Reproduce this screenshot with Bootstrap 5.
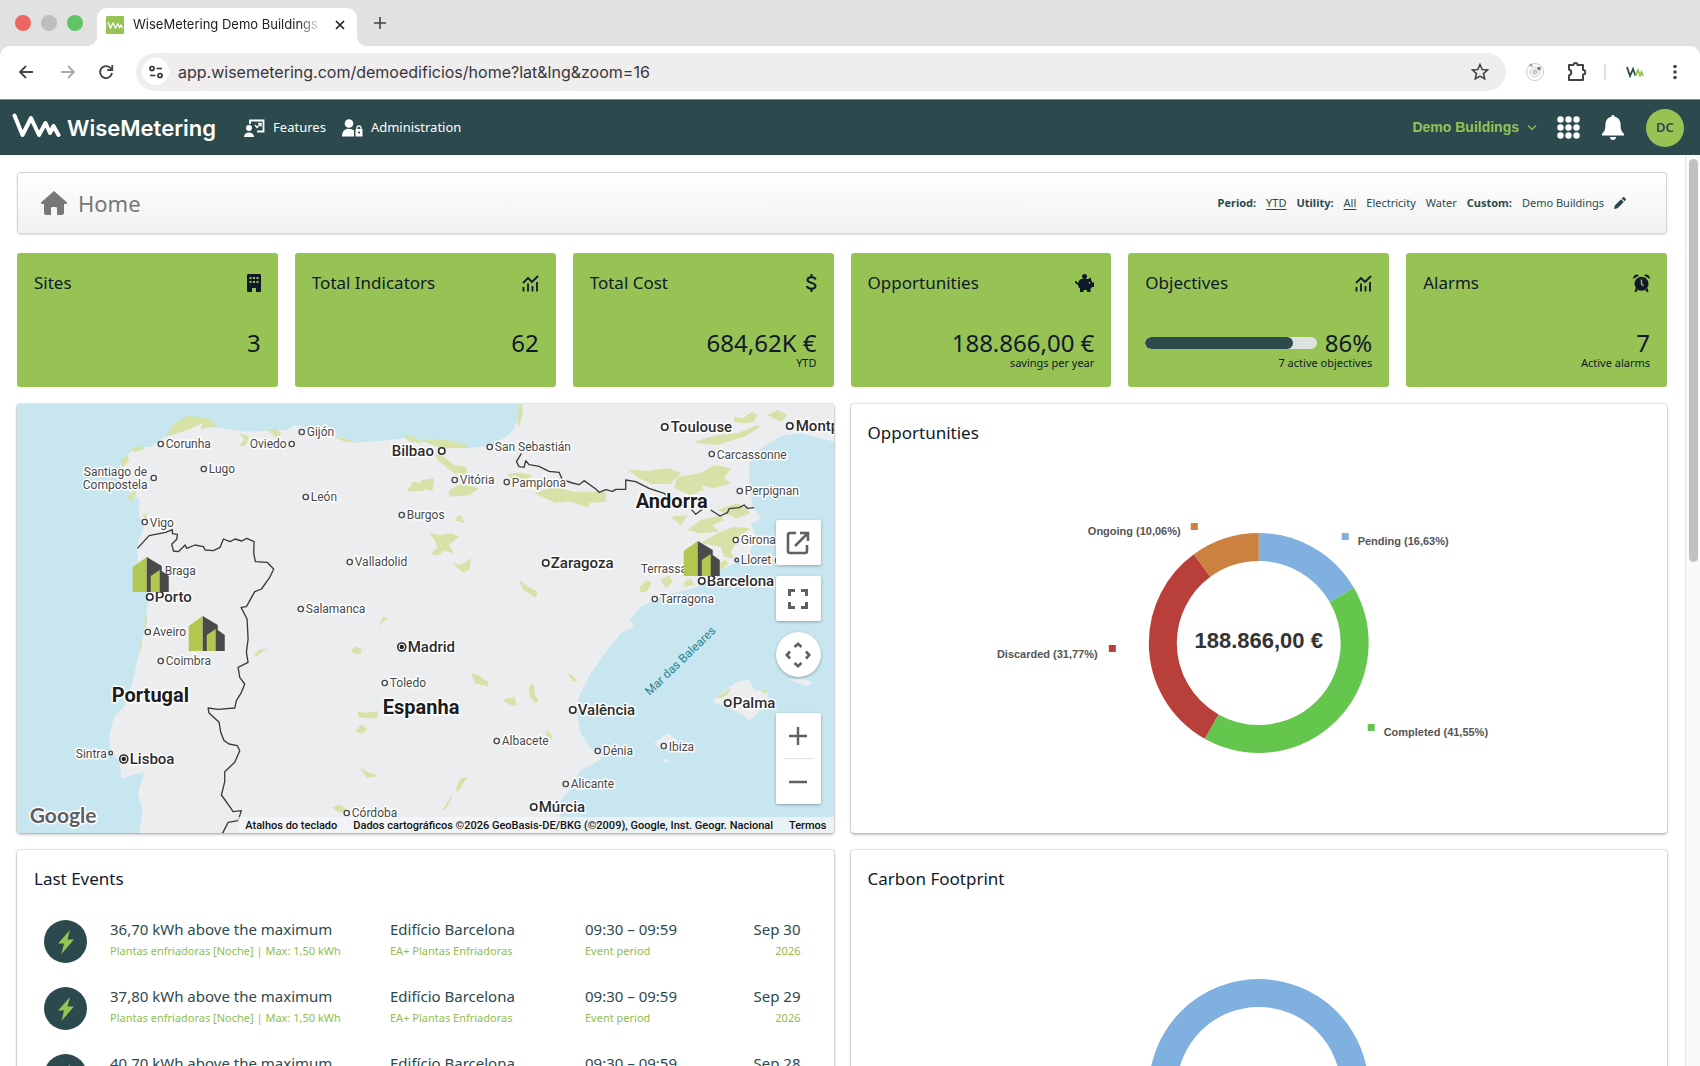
<!DOCTYPE html>
<html lang="en">
<head>
<meta charset="utf-8">
<meta name="viewport" content="width=device-width, initial-scale=1">
<title>WiseMetering Demo Buildings</title>
<link href="https://cdn.jsdelivr.net/npm/bootstrap@5.3.0/dist/css/bootstrap.min.css" rel="stylesheet">
<style>
:root{--lime:#97c354;--teal:#2c4a4d;--ink:#10192c}
body{font-family:"Noto Sans",sans-serif;font-size:15px;color:var(--teal);background:#fff}
a{color:inherit;text-decoration:none}
svg{display:block;flex:none}
.chrome{font-family:Inter,sans-serif;background:#e1e1e1}
.tabstrip{height:46px;padding-left:15px}
.light{width:16px;height:16px;border-radius:50%;margin-right:10px}
.tab{width:260px;height:38px;margin:8px 0 0 4px;padding:0 9px 5px;background:#fff;border-radius:10px 10px 0 0;position:relative;font-size:13px;color:#222}
.tab::before,.tab::after{content:"";position:absolute;bottom:0;width:10px;height:10px}
.tab::before{left:-10px;background:radial-gradient(circle at 0 0,transparent 10px,#fff 10px)}
.tab::after{right:-10px;background:radial-gradient(circle at 100% 0,transparent 10px,#fff 10px)}
.tabname{width:188px;margin-left:9px;white-space:nowrap;overflow:hidden;-webkit-mask-image:linear-gradient(90deg,#000 88%,transparent 100%);mask-image:linear-gradient(90deg,#000 88%,transparent 100%)}
.plain{border:0;background:none;padding:0;color:inherit}
.toolbar{height:53px;background:#fff;border-radius:10px 10px 0 0;padding:0 18px 2px 16px;color:#444}
.omnibox{height:38px;background:#efedee;border-radius:19px;margin-left:20px;padding:0 16px 0 6px}
.siteinfo{width:27px;height:27px;border-radius:50%;background:#fff}
.omnibox input{font-size:16px;color:#38363b;background:none;border:0;outline:0;padding:0;margin-left:9px;min-width:0}
.topnav{height:56px;background:var(--teal);border-top:1px solid #7d9091;padding:0 16px 0 12px;color:#fff;font-size:13px;flex:none}
.brandname{font-family:Inter,sans-serif;font-weight:600;font-size:22px;line-height:30px;margin-left:6px}
.account{font-family:"Liberation Sans",sans-serif;font-weight:700;font-size:14px;color:var(--lime)}
.iconset{gap:22px;margin-left:20px}
.avatar{width:38px;height:38px;border-radius:50%;background:var(--lime);color:var(--teal);font-weight:600}
.content{padding:17px 18px 0 17px}
.headbar{height:62px;border:1px solid #d3d3d3;border-radius:3px;background:linear-gradient(#fff,#f1f1f1);padding:0 40px 0 23px;box-shadow:0 1px 2px rgba(0,0,0,.12);font-size:11px;margin-bottom:19px}
.headbar h1{font-size:22px;color:#777;margin:0 0 0 11px;font-weight:400}
.filters{gap:10px}
.filters u{text-underline-offset:2px}
.tiles{display:grid;grid-template-columns:repeat(6,1fr);gap:17px;color:var(--ink);margin-bottom:17px}
.tile{background:var(--lime);border-radius:3px;height:134px;padding:17px 17px 18px}
.tile h2,.panel h2{font-size:17px;line-height:26px;margin:0;font-weight:400;color:var(--ink)}
.figure-value{font-size:24px;line-height:28px;text-align:right}
.tilenote{font-size:11px;line-height:12px;height:12px;text-align:right}
.meter{height:12px;border-radius:6px;background:#dbe3e0}
.meter .progress-bar{background:var(--teal);border-radius:6px}
.panels{display:grid;grid-template-columns:1fr 1fr;gap:17px}
.panel{background:#fff;border-radius:3px;box-shadow:0 0 2px rgba(0,0,0,.4),0 2px 3px rgba(0,0,0,.2);height:429px;overflow:hidden}
.panel h2{padding:16px 17px 0}
.chart{font-family:"Liberation Sans",sans-serif;font-weight:700;font-size:11px;fill:#555;width:100%}
.mapview{font-family:Roboto,sans-serif;font-size:12px}
.mapview text{paint-order:stroke;stroke:#fff;stroke-width:3px;stroke-linejoin:round;fill:#48484a}
.mapview .city{font-size:15px;font-weight:500;fill:#2c2c2e}
.mapview .country{font-size:20px;font-weight:700;fill:#1c1c1e}
.mapview .sea{stroke:none;fill:#2a8494}
.mapview .logo{font-family:Lato,sans-serif;font-size:21px;font-weight:700;fill:#5c6064}
.controls{position:absolute;top:116px;right:13px;width:45px}
.controls button,.zoombox{background:#fff;border:0;border-radius:2px;box-shadow:0 1px 3px rgba(0,0,0,.3);width:45px}
.controls button{height:45px;padding:0;margin-bottom:11px;display:flex;align-items:center;justify-content:center}
.zoombox{margin-top:36px}
.controls .zoombox button{box-shadow:none;margin:0}
.mapfoot{position:absolute;right:0;bottom:0;height:16px;background:rgba(245,246,247,.75);font-size:11px;line-height:18px;color:#111;font-weight:500;padding:0 7px}
.mapfoot>*{white-space:nowrap}
.event{display:grid;grid-template-columns:66px 280px 195px 1fr;padding:0 33px 0 27px;height:67px;align-items:center}
.events{padding-top:16px}
.event b{font-weight:400;display:block;line-height:22px}
.event small{font-size:11px;color:#8fbe4b;display:block;line-height:22px;margin-bottom:4px}
.bolt{width:43px;height:43px;border-radius:50%;background:var(--teal)}
.scrollrail{width:15px;border-left:1px solid #e6e6e6;background:#fafafa;padding:4px 2px 0 3px;flex:none}
.scrollthumb{height:403px;border-radius:5px;background:#c1c1c1}
</style>
<script src="https://cdn.jsdelivr.net/npm/bootstrap@5.3.0/dist/js/bootstrap.bundle.min.js"></script>
</head>
<body class="vh-100 d-flex flex-column overflow-hidden">
<header class="chrome flex-shrink-0">
  <div class="tabstrip d-flex align-items-center">
    <span class="light" style="background:#ec6560"></span><span class="light" style="background:#bdbdbd"></span><span class="light" style="background:#60c463"></span>
    <div class="tab d-flex align-items-center">
      <svg width="18" height="18" viewBox="0 0 18 18"><rect width="18" height="18" rx="1" fill="#97c354"/><path d="M2 6l2.500 6L7 7l2.500 5L12 8l1.500 3.500L15 9l1.500 3" fill="none" stroke="#fff" stroke-width="1.300"/></svg>
      <span class="tabname">WiseMetering Demo Buildings</span>
      <button class="plain ms-auto" aria-label="Close tab"><svg width="16" height="16" viewBox="0 0 16 16" stroke="#222" stroke-width="1.700"><path d="M4 4l8 8M12 4l-8 8"/></svg></button>
    </div>
    <button class="plain ms-3" aria-label="New tab"><svg width="14" height="14" viewBox="0 0 14 14" stroke="#444" stroke-width="1.600"><path d="M7 1v12M1 7h12"/></svg></button>
  </div>
  <div class="toolbar d-flex align-items-center">
    <button class="plain" aria-label="Back"><svg width="20" height="20" viewBox="0 0 20 20" fill="none" stroke="#444" stroke-width="1.800"><path d="M17 10H4M10 4l-6 6 6 6"/></svg></button>
    <button class="plain ms-4" aria-label="Forward"><svg width="20" height="20" viewBox="0 0 20 20" fill="none" stroke="#aaa" stroke-width="1.800"><path d="M1 10h13M8 4l6 6-6 6"/></svg></button>
    <button class="plain ms-3" aria-label="Reload"><svg width="20" height="20" viewBox="0 0 20 20" fill="none" stroke="#444" stroke-width="1.800"><path d="M16 11a6 6 0 1 1-1.500-5L16 7.500M16.300 3v5h-5"/></svg></button>
    <div class="omnibox d-flex align-items-center flex-fill">
      <span class="siteinfo d-flex align-items-center justify-content-center"><svg width="16" height="16" viewBox="0 0 16 16" fill="none" stroke="#333" stroke-width="1.700"><circle cx="4" cy="4.500" r="2"/><path d="M8.500 4.500H14M2 11.500h5.500"/><circle cx="12" cy="11.500" r="2"/></svg></span>
      <input class="flex-fill" type="text" aria-label="Address" value="app.wisemetering.com/demoedificios/home?lat&amp;lng&amp;zoom=16">
      <button class="plain" aria-label="Bookmark"><svg width="20" height="20" viewBox="0 0 20 20" fill="none" stroke="#444" stroke-width="1.600"><path d="M10 2.500l2.200 5 5.300.5-4 3.600 1.200 5.300L10 14.100l-4.700 2.800 1.200-5.300-4-3.600 5.300-.5z"/></svg></button>
    </div>
    <svg class="ms-3" width="26" height="20" viewBox="0 0 26 20" fill="none" stroke="#ccc"><circle cx="13" cy="10" r="8.500"/><circle cx="13" cy="10" r="5"/><circle cx="13" cy="10" r="2.500" fill="#ccc"/><circle cx="9" cy="3" r="1.500" fill="#999" stroke="none"/><circle cx="17" cy="6.500" r="1.800" fill="#777" stroke="none"/></svg>
    <svg class="ms-3 me-3" width="24" height="22" viewBox="0 0 24 22"><path d="M5 4h4.500a2 2 0 0 1 4 0H19v5a2 2 0 0 1 0 4.500V19H5v-4.500c3-1 3-5 0-6z" fill="none" stroke="#444" stroke-width="2" stroke-linejoin="round"/></svg>
    <span class="border-start border-2 me-3 pe-1" style="height:16px"></span>
    <svg width="18" height="12" viewBox="0 0 18 12" fill="none" stroke-width="1.800"><path d="M1 1l3 9 3-7 2.500 7" stroke="#2c4a4d"/><path d="M9.500 10l2.500-6 2 5.500L15.500 6l1.500 4" stroke="#97c354"/></svg>
    <button class="plain ms-4" aria-label="Menu"><svg width="14" height="18" viewBox="0 0 14 18" fill="#444"><circle cx="7" cy="3.500" r="1.800"/><circle cx="7" cy="9" r="1.800"/><circle cx="7" cy="14.500" r="1.800"/></svg></button>
  </div>
</header>

<nav class="topnav d-flex align-items-center">
  <a href="#" class="d-flex align-items-start"><svg width="49" height="26" viewBox="0 0 49 26" fill="none" stroke="#fff" stroke-width="4" stroke-linejoin="round" stroke-linecap="round"><path d="M2.500 2.500l8 19.500L19 5l8 17 6.500-12L38 20l3.500-7 5 9"/></svg><span class="brandname">WiseMetering</span></a>
  <a href="#" class="d-flex align-items-center ms-4 ps-1"><svg width="21" height="18" viewBox="0 0 21 18"><path d="M6 5V1.500h13.500v11H13" fill="none" stroke="#fff" stroke-width="1.800"/><path d="M11 6l2 2.500L17 4.500M17 7.500v-3h-3" fill="none" stroke="#fff" stroke-width="1.300"/><circle cx="5" cy="9" r="3" fill="#fff"/><path d="M0 18c0-6 10-6 10 0z" fill="#fff"/></svg><span class="ms-2">Features</span></a>
  <a href="#" class="d-flex align-items-center ms-3"><svg width="21" height="18" viewBox="0 0 21 18" fill="#fff"><circle cx="7" cy="4.500" r="4.300"/><path d="M0 17.500c0-9 8-9 12-6v6z"/><path d="M13.500 10h7v7.500h-7z"/><path d="M15 10.500V9a2 2 0 0 1 4 0v1.500" fill="none" stroke="#fff" stroke-width="1.300"/><circle cx="17" cy="13.500" r="1.100" fill="#2c4a4d"/></svg><span class="ms-2">Administration</span></a>
  <button class="plain account ms-auto d-flex align-items-center">Demo Buildings<svg class="ms-2" width="10" height="8" viewBox="0 0 10 8" fill="none" stroke="#97c354" stroke-width="1.200"><path d="M1 1.500l4 4 4-4"/></svg></button>
  <div class="iconset d-flex align-items-center">
  <button class="plain" aria-label="Apps"><svg width="23" height="23" viewBox="0 0 23 23" fill="#fff"><circle cx="3.500" cy="3.500" r="3.200"/><circle cx="11.500" cy="3.500" r="3.200"/><circle cx="19.500" cy="3.500" r="3.200"/><circle cx="3.500" cy="11.500" r="3.200"/><circle cx="11.500" cy="11.500" r="3.200"/><circle cx="19.500" cy="11.500" r="3.200"/><circle cx="3.500" cy="19.500" r="3.200"/><circle cx="11.500" cy="19.500" r="3.200"/><circle cx="19.500" cy="19.500" r="3.200"/></svg></button>
  <button class="plain" aria-label="Notifications"><svg width="22" height="25" viewBox="0 0 22 25" fill="#fff"><path d="M11 0c1 0 1.600.8 1.600 1.800 4 .8 6 4 6 8 0 5 1 6.500 3.400 9.200V20.500H0V19c2.400-2.700 3.400-4.200 3.400-9.200 0-4 2-7.200 6-8C9.400.8 10 0 11 0zM8 22h6c0 4-6 4-6 0z"/></svg></button>
  <button class="plain avatar">DC</button>
  </div>
</nav>

<div class="d-flex flex-fill overflow-hidden">
<main class="content flex-fill overflow-hidden">
  <div class="headbar d-flex align-items-center">
    <svg width="26" height="24" viewBox="0 0 26 24" fill="#777"><path d="M13 0l13 11.500c0 1-.5 1.500-1.500 1.500H23v8.500c0 1.500-.8 2.500-2.300 2.500H16v-6.500c0-1-.6-1.500-1.500-1.500h-3c-.9 0-1.500.5-1.500 1.500V24H5.300C3.800 24 3 23 3 21.500V13H1.500C.5 13 0 12.500 0 11.500z"/></svg>
    <h1>Home</h1>
    <div class="filters d-flex align-items-center ms-auto">
      <strong>Period:</strong><a href="#"><u>YTD</u></a><strong>Utility:</strong><a href="#"><u>All</u></a><a href="#">Electricity</a><a href="#">Water</a><strong>Custom:</strong><a href="#">Demo Buildings</a>
      <button class="plain" aria-label="Edit"><svg width="12" height="12" viewBox="0 0 12 12" fill="#2c4a4d"><path d="M0 12l.8-3.600L7 2.200l2.800 2.800-6.200 6.200zM7.800 1.400L8.900.3c.4-.4 1-.4 1.400 0l1.400 1.400c.4.4.4 1 0 1.400l-1.100 1.100z"/></svg></button>
    </div>
  </div>

  <section class="tiles">
    <div class="tile d-flex flex-column">
      <div class="d-flex align-items-center justify-content-between"><h2>Sites</h2><svg width="14" height="18" viewBox="0 0 14 18"><path fill="#10192c" fill-rule="evenodd" d="M1.500 0h11C13.500 0 14 .5 14 1.500v15c0 1-.5 1.500-1.500 1.500H9v-4H5v4H1.500C.5 18 0 17.500 0 16.500v-15C0 .5.500 0 1.500 0zM2.500 3v2h2V3zM6 3v2h2V3zM9.500 3v2h2V3zM2.500 7v2h2V7zM6 7v2h2V7zM9.500 7v2h2V7z"/></svg></div>
      <div class="figure-value mt-auto">3</div><div class="tilenote"></div>
    </div>
    <div class="tile d-flex flex-column">
      <div class="d-flex align-items-center justify-content-between"><h2>Total Indicators</h2><svg width="17" height="17" viewBox="0 0 17 17" fill="none" stroke="#10192c" stroke-width="1.800"><path d="M1 8l5-5 4 4 6-6M1.500 12v4.500M6 8.500v8M10.500 11v5.500M15 7v9.500"/></svg></div>
      <div class="figure-value mt-auto">62</div><div class="tilenote"></div>
    </div>
    <div class="tile d-flex flex-column">
      <div class="d-flex align-items-center justify-content-between"><h2>Total Cost</h2><svg width="11" height="18" viewBox="0 0 11 18" fill="none" stroke="#10192c" stroke-width="2"><path d="M9.500 5.500C9 2.500 1.500 2.500 1.500 6c0 3.500 8 2.300 8 6 0 3.500-8 3.500-8.500 0M5.500 0v3.500M5.500 14.500V18"/></svg></div>
      <div class="figure-value mt-auto">684,62K €</div><div class="tilenote">YTD</div>
    </div>
    <div class="tile d-flex flex-column">
      <div class="d-flex align-items-center justify-content-between"><h2>Opportunities</h2><svg width="19" height="18" viewBox="0 0 19 18" fill="#10192c"><circle cx="9.500" cy="2.500" r="2.500"/><path d="M6 5h7l3-1.500V6l1.500 2.500H19V13h-2l-1.500 2v3H12v-2H8.500v2H5v-3.500C3.500 13.500 3 12 3 10.500 1 10.500 0 9 0 7h1.500c0 1 .5 1.700 1.800 1.700C3.800 7 4.500 5.800 6 5z"/><circle cx="14.500" cy="8.800" r=".9" fill="#97c354"/></svg></div>
      <div class="figure-value mt-auto">188.866,00 €</div><div class="tilenote">savings per year</div>
    </div>
    <div class="tile d-flex flex-column">
      <div class="d-flex align-items-center justify-content-between"><h2>Objectives</h2><svg width="17" height="17" viewBox="0 0 17 17" fill="none" stroke="#10192c" stroke-width="1.800"><path d="M1 8l5-5 4 4 6-6M1.500 12v4.500M6 8.500v8M10.500 11v5.500M15 7v9.500"/></svg></div>
      <div class="d-flex align-items-center mt-auto"><div class="progress meter flex-fill me-2" role="progressbar" aria-label="Objectives" aria-valuenow="86" aria-valuemin="0" aria-valuemax="100"><div class="progress-bar" style="width:86%"></div></div><div class="figure-value">86%</div></div><div class="tilenote">7 active objectives</div>
    </div>
    <div class="tile d-flex flex-column">
      <div class="d-flex align-items-center justify-content-between"><h2>Alarms</h2><svg width="17" height="18" viewBox="0 0 17 18"><g fill="#10192c"><circle cx="8.500" cy="9.700" r="7"/><path d="M0 5C0 1 4-.5 6 1.500zM17 5c0-4-4-5.500-6-3.500zM2.500 14l2.500 2-2 2H1.500zM14.500 14L12 16l2 2h1.500z"/></g><path d="M8.500 5.500v4.500l2 2" fill="none" stroke="#97c354" stroke-width="1.400"/></svg></div>
      <div class="figure-value mt-auto">7</div><div class="tilenote">Active alarms</div>
    </div>
  </section>

  <section class="panels">
    <div class="panel mapview position-relative">
      <svg width="100%" height="429" viewBox="16 404 817 429" preserveAspectRatio="xMidYMid slice">
        <defs><g id="site"><path d="M0 10L14 0v35H0z" fill="#b1c74f"/><path d="M14 0l15 9v5l7 5v16H14z" fill="#4a4a4a"/><path d="M18 19l9-6v22h-9z" fill="#b1c74f"/></g></defs>
        <rect x="15" y="403" width="820" height="432" fill="#c8e6f0"/>
        <g transform="translate(0 400) scale(.33333)">
          <path fill="#ecedee" d="M1568 0L1558 50 1530 100 1480 135 1400 145 1330 130 1260 125 1210 115 1140 122 1060 128 1000 112 930 85 880 75 860 90 740 95 640 82 600 65 550 62 500 105 450 140 400 145 360 190 350 230 380 270 415 300 415 350 432 372 408 440 412 490 432 540 442 600 435 660 425 720 405 800 390 870 370 920 340 950 325 1010 330 1060 355 1080 362 1135 430 1115 412 1180 425 1230 415 1310H1640L1680 1240 1670 1210 1700 1180 1740 1110 1790 1085 1808 1068 1770 1045 1740 1000 1728 940 1735 890 1770 820 1820 750 1860 700 1900 682 1888 660 1920 620 1980 590 2090 560 2160 510 2245 470 2262 400 2250 372 2282 355 2255 320 2245 240 2245 190 2280 145 2340 108 2400 100 2520 130V0z"/>
          <path fill="#ecedee" d="M2135 905l25-25 50-35 35-7 15 32 40 5v25l-30 40-25 22-25-22-40-20zM1960 1030l40-30 30 20-10 20-35 10zM1985 1076l18 4-8 12zM2355 838l60 0 20 12-15 8z"/>
          <g fill="#d7e2a8">
            <path d="M495 110l25-40 40-22 60 5 30 25-50 10 5-18-45 20zM715 100l30 10-10 25-20 5 15-22zM800 90l30-2 12 15-15 10zM1000 112l30 2 35 14-30-2zM1210 105l30 5 25 20-40-5zM360 180l20-15 5 15-20 25zM385 150l30-13 18 10-30 8zM380 290l20-20 8 12-18 24zM425 345l12-6v20z"/>
            <path d="M760 765l15-15 28-5-20 12-15 12zM1050 750l15-10 18 8-4 14-20-2zM1132 685l15-35 15 5-20 15zM1070 935l30 3 32-5-2 22-55-2zM1062 995l20-22 18 15-15 12zM1078 1105l30 14 25 10-35 4zM995 1222l20-8 20 10-5 14-20-3zM1218 275l18-30 35 5 0 22zM435 640l5 15-5 30-5-5zM420 720l5 15-8 22z"/>
            <path d="M1260 120l70-2 60 15 20 12-90 0zM1300 160l30 10 30 25 35 5 5 25-40-5-50-40zM1260 240l40-5-5 38-35-8zM1345 270l40-20 50 15-30 20-60 5zM1285 400l35 5 30-5 25 10-30 25 15 25-30-8-20 15-20-5 20-20-10-25zM1356 490l25 5 30-20-5 35-20 8zM1368 350l15-4 8 24-25-8zM1555 540l20 15 35 20-5 18-40-25z"/>
            <path d="M1520 220l35-2 40 8-20 20-40 0zM1600 280l60-20 60 15 95 0v30l-50 5 0 14-60-20-40 5zM1880 208l60 5 60-8 40 12-30 35-60 0-40-20zM2080 125l70-20 60-5 60-25 10 5-50 30-80 25-60-5zM2200 50l25 5 30-20 15 10-10 20-30 5-30-5zM2300 45l30-15 30 15-20 20zM2030 230l70-10 40-25 50 10-20 30 20 15-50 15-40-10 10 15-40 15-50-20zM2060 390l40-30 60-15 10 15-35 15 20 20-60 5zM2100 430l50-30 50-20 50 5-30 20-30 50 10 20-30-5-10-30zM2150 330l60-20 20 10 20 20-40 15zM2010 350l50-4-20 30zM1918 560l20-20 15 10-15 25-20 2zM1980 540l25-15 10 20-20 20zM2050 545l20-10 10 20-30 5zM2155 490l22-12 5 14-22 18z"/>
            <path d="M1412 820l20 5 30 20 0 15-40-10zM1505 900l35-10 8 28-18-2zM1585 860l12-10 8 40 10 10-10 10-18-20zM1700 820l15 5 15 20-15-2zM1635 990l15 10 5 20-20-15zM1365 1165l15-30 20-5-30 50zM1325 1230l25-38 5 0-20 35zM2150 890l40-26-10 20-25 12zM2285 870l15 2-3 8-12-2zM1565 12l0 30-10 40-5-20 5-50z"/>
          </g>
          <g fill="none" stroke="#3a3a3c" stroke-width="4" stroke-linejoin="round">
            <path d="M410 445l35-38 50-10 20-8 0 12 15 2-2 15-15 15 5 20 15 2 20-20 5 10 25-10 25 5 5 10 25 2 20-10 10-25 20 8 15-8 20 6 15-8 22 10-1 35 5 25 35 2 20 20-12 25-25 35-20 8-25 45-16 2 18 35 3 60-5 40 5 30-30 15 5 30 15 20-10 25-15 25-5 22-50 4-30-4 3 15 30 28 5 30 10 25 15 10 25 5 7 15-15 35-30 28 0 30-10 40 25 35 10 15 25-3-10 30-30 5-15 30-15 15-12 40"/>
            <path d="M1562 160l-15 25 8 15 15 2 5-20 10 12 30 5 30 15 30 3 10 22 30 10 20 5 15-12 35 25 10 10 20-8 20 5 10-6 30 0v-28l30 5 40 20 45 15 15 15M2070 325l15 18 20-15M2130 330l28 18 22-10 5-12 30-3 15-8 10 10 20-2"/>
          </g>
        </g>
        <g fill="#fff" stroke="#48484a" stroke-width="1.400">
          <circle cx="160" cy="444" r="2.600"/><circle cx="291" cy="444" r="2.600"/><circle cx="301" cy="432" r="2.600"/><circle cx="203" cy="469" r="2.600"/><circle cx="153" cy="478" r="2.600"/><circle cx="305" cy="497" r="2.600"/><circle cx="401" cy="515" r="2.600"/><circle cx="144" cy="522" r="2.600"/><circle cx="349" cy="562" r="2.600"/><circle cx="300" cy="609" r="2.600"/><circle cx="147" cy="632" r="2.600"/><circle cx="160" cy="661" r="2.600"/><circle cx="384" cy="683" r="2.600"/><circle cx="346" cy="813" r="2.600"/><circle cx="110" cy="753" r="1.800"/><circle cx="489" cy="447" r="2.600"/><circle cx="454" cy="480" r="2.600"/><circle cx="506" cy="482" r="2.600"/><circle cx="711" cy="454" r="2.600"/><circle cx="739" cy="491" r="2.600"/><circle cx="735" cy="540" r="2.600"/><circle cx="736" cy="560" r="1.800"/><circle cx="654" cy="599" r="2.600"/><circle cx="496" cy="741" r="2.600"/><circle cx="597" cy="751" r="2.600"/><circle cx="663" cy="746" r="2.600"/><circle cx="565" cy="784" r="2.600"/>
          <g stroke="#2c2c2e" stroke-width="1.600"><circle cx="441" cy="451" r="3.200"/><circle cx="149" cy="597" r="3.200"/><circle cx="401" cy="647" r="4"/><circle cx="123" cy="759" r="4"/><circle cx="664" cy="427" r="3.200"/><circle cx="789" cy="426" r="3.200"/><circle cx="545" cy="563" r="3.200"/><circle cx="701" cy="581" r="3.200"/><circle cx="572" cy="710" r="3.200"/><circle cx="727" cy="703" r="3.200"/><circle cx="533" cy="807" r="3.200"/></g>
          <g fill="#222" stroke="none"><circle cx="401" cy="647" r="2.200"/><circle cx="123" cy="759" r="2.200"/></g>
        </g>
        <text x="165" y="448">Corunha</text><text x="249" y="448">Oviedo</text><text x="306" y="436">Gijón</text><text x="208" y="473">Lugo</text><text x="83" y="476">Santiago de</text><text x="82" y="489">Compostela</text><text x="310" y="501">León</text><text x="406" y="519">Burgos</text><text x="149" y="527">Vigo</text><text x="354" y="566">Valladolid</text><text x="164" y="575">Braga</text><text x="305" y="613">Salamanca</text><text x="152" y="636">Aveiro</text><text x="165" y="665">Coimbra</text><text x="389" y="687">Toledo</text><text x="351" y="817">Córdoba</text><text x="75" y="758">Sintra</text>
        <text x="494" y="451">San Sebastián</text><text x="459" y="484">Vitória</text><text x="511" y="487">Pamplona</text><text x="716" y="459">Carcassonne</text><text x="744" y="495">Perpignan</text><text x="740" y="544">Girona</text><text x="740" y="564">Lloret de</text><text x="640" y="573">Terrassa</text><text x="659" y="603">Tarragona</text><text x="501" y="745">Albacete</text><text x="602" y="755">Dénia</text><text x="668" y="751">Ibiza</text><text x="570" y="788">Alicante</text>
        <g><text class="city" x="391" y="456">Bilbao</text><text class="city" x="154" y="602">Porto</text><text class="city" x="407" y="652">Madrid</text><text class="city" x="129" y="764">Lisboa</text><text class="city" x="670" y="432">Toulouse</text><text class="city" x="795" y="431">Montpellier</text><text class="city" x="550" y="568">Zaragoza</text><text class="city" x="706" y="586">Barcelona</text><text class="city" x="577" y="715">Valência</text><text class="city" x="732" y="708">Palma</text><text class="city" x="538" y="812">Múrcia</text></g>
        <text class="country" x="111" y="702">Portugal</text><text class="country" x="382" y="714">Espanha</text><text class="country" x="635" y="508">Andorra</text>
        <text class="sea" transform="translate(649 696) rotate(-44)">Mar das Baleares</text>
        <use href="#site" x="132" y="557"/><use href="#site" x="188" y="616"/><use href="#site" x="683" y="541"/>
        <text class="logo" x="29" y="823">Google</text>
      </svg>
      <div class="controls">
        <button aria-label="Open map"><svg width="24" height="24" viewBox="0 0 24 24" fill="none" stroke="#5f6063" stroke-width="2.600"><path d="M10 2H4a2 2 0 0 0-2 2v16a2 2 0 0 0 2 2h15a2 2 0 0 0 2-2v-6M14 2h8v8M22 2L9 15"/></svg></button>
        <button aria-label="Full screen"><svg width="22" height="22" viewBox="0 0 22 22" fill="none" stroke="#5f6063" stroke-width="3"><path d="M2.500 8V2.500H8M14 2.500h5.500V8M19.500 14v5.500H14M8 19.500H2.500V14"/></svg></button>
        <button class="rounded-circle" aria-label="Pan"><svg width="26" height="26" viewBox="0 0 26 26" fill="none" stroke="#5f6063" stroke-width="2.600"><path d="M9.500 5L13 1.800 16.500 5M9.500 21l3.500 3.200 3.500-3.200M5 9.500L1.800 13 5 16.500M21 9.500l3.200 3.500-3.200 3.500"/></svg></button>
        <div class="zoombox"><button aria-label="Zoom in"><svg width="20" height="20" viewBox="0 0 20 20" stroke="#5f6063" stroke-width="2.400"><path d="M10 1v18M1 10h18"/></svg></button><div class="border-top mx-2"></div><button aria-label="Zoom out"><svg width="20" height="20" viewBox="0 0 20 20" stroke="#5f6063" stroke-width="2.400"><path d="M1 10h18"/></svg></button></div>
      </div>
      <div class="mapfoot d-flex"><a href="#" class="me-3">Atalhos do teclado</a><span class="me-3">Dados cartográficos ©2026 GeoBasis-DE/BKG (©2009), Google, Inst. Geogr. Nacional</span><a href="#">Termos</a></div>
    </div>

    <div class="panel">
      <h2>Opportunities</h2>
      <svg class="chart" height="387" viewBox="851 446 817 387">
        <g fill="none" stroke-width="28" transform="rotate(-90 1259 643)">
          <circle cx="1259" cy="643" r="96" pathLength="100" stroke="#7fb0df" stroke-dasharray="16.630 100"/>
          <circle cx="1259" cy="643" r="96" pathLength="100" stroke="#65c64e" stroke-dasharray="41.550 100" stroke-dashoffset="-16.630"/>
          <circle cx="1259" cy="643" r="96" pathLength="100" stroke="#b9403a" stroke-dasharray="31.770 100" stroke-dashoffset="-58.180"/>
          <circle cx="1259" cy="643" r="96" pathLength="100" stroke="#cd8140" stroke-dasharray="10.050 100" stroke-dashoffset="-89.950"/>
        </g>
        <rect x="1191" y="523" width="7" height="7" fill="#cd8140"/><rect x="1342" y="533" width="7" height="7" fill="#7fb0df"/><rect x="1368" y="724" width="7" height="7" fill="#65c64e"/><rect x="1109" y="645" width="7" height="7" fill="#b9403a"/>
        <text x="1088" y="535">Ongoing (10,06%)</text><text x="1358" y="545">Pending (16,63%)</text><text x="1384" y="736">Completed (41,55%)</text><text x="997" y="658">Discarded (31,77%)</text>
        <text x="1259" y="648" text-anchor="middle" font-size="22" fill="#333">188.866,00 €</text>
      </svg>
    </div>

    <div class="panel">
      <h2>Last Events</h2>
      <div class="events">
        <div class="event"><span class="bolt d-flex align-items-center justify-content-center"><svg width="18" height="24" viewBox="0 0 18 24" fill="#97c354"><path d="M13 0L1 13.500h6L4.500 24 17 9.500h-6.500z"/></svg></span><div><b>36,70 kWh above the maximum</b><small>Plantas enfriadoras [Noche] | Max: 1,50 kWh</small></div><div><b>Edifício Barcelona</b><small>EA+ Plantas Enfriadoras</small></div><div class="d-flex justify-content-between"><div><b>09:30 – 09:59</b><small>Event period</small></div><div class="text-end"><b>Sep 30</b><small>2026</small></div></div></div>
        <div class="event"><span class="bolt d-flex align-items-center justify-content-center"><svg width="18" height="24" viewBox="0 0 18 24" fill="#97c354"><path d="M13 0L1 13.500h6L4.500 24 17 9.500h-6.500z"/></svg></span><div><b>37,80 kWh above the maximum</b><small>Plantas enfriadoras [Noche] | Max: 1,50 kWh</small></div><div><b>Edifício Barcelona</b><small>EA+ Plantas Enfriadoras</small></div><div class="d-flex justify-content-between"><div><b>09:30 – 09:59</b><small>Event period</small></div><div class="text-end"><b>Sep 29</b><small>2026</small></div></div></div>
        <div class="event"><span class="bolt d-flex align-items-center justify-content-center"><svg width="18" height="24" viewBox="0 0 18 24" fill="#97c354"><path d="M13 0L1 13.500h6L4.500 24 17 9.500h-6.500z"/></svg></span><div><b>40,70 kWh above the maximum</b><small>Plantas enfriadoras [Noche] | Max: 1,50 kWh</small></div><div><b>Edifício Barcelona</b><small>EA+ Plantas Enfriadoras</small></div><div class="d-flex justify-content-between"><div><b>09:30 – 09:59</b><small>Event period</small></div><div class="text-end"><b>Sep 28</b><small>2026</small></div></div></div>
      </div>
    </div>

    <div class="panel">
      <h2>Carbon Footprint</h2>
      <svg class="chart" height="387" viewBox="851 446 817 387"><circle cx="1259" cy="643" r="96" fill="none" stroke="#7fb0df" stroke-width="28"/></svg>
    </div>
  </section>
</main>
<div class="scrollrail"><div class="scrollthumb"></div></div>
</div>
</body>
</html>
